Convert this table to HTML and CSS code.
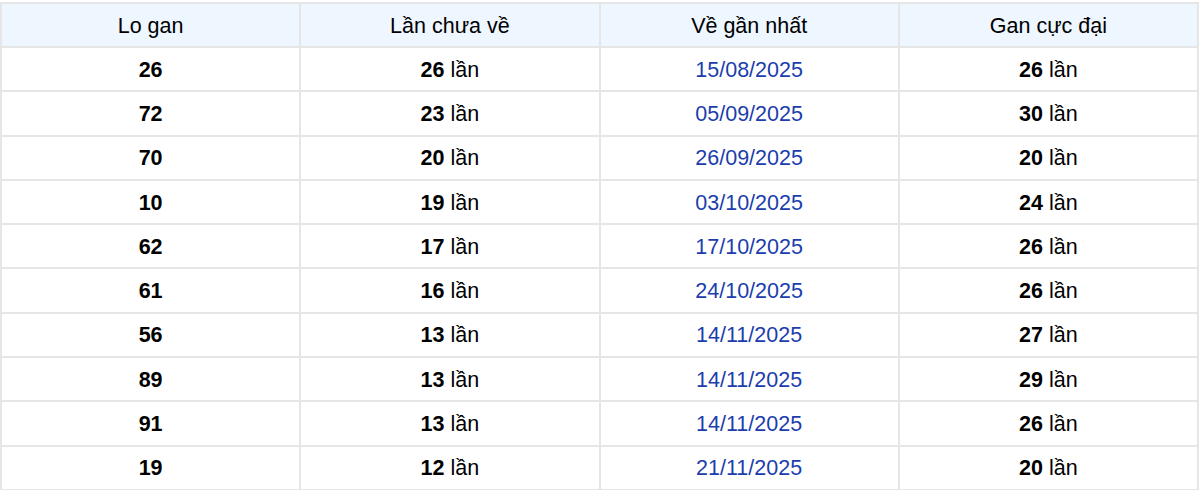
FILE: index.html
```html
<!DOCTYPE html>
<html lang="vi">
<head>
<meta charset="utf-8">
<title>Lo gan</title>
<link rel="stylesheet" href="styles.css">
</head>
<body>
<div class="wrap">
<table class="gan">
<thead>
<tr><th>Lo gan</th><th>Lần chưa về</th><th>Về gần nhất</th><th>Gan cực đại</th></tr>
</thead>
<tbody>
<tr><td><b>26</b></td><td><b>26</b> lần</td><td class="date">15/08/2025</td><td><b>26</b> lần</td></tr>
<tr><td><b>72</b></td><td><b>23</b> lần</td><td class="date">05/09/2025</td><td><b>30</b> lần</td></tr>
<tr><td><b>70</b></td><td><b>20</b> lần</td><td class="date">26/09/2025</td><td><b>20</b> lần</td></tr>
<tr><td><b>10</b></td><td><b>19</b> lần</td><td class="date">03/10/2025</td><td><b>24</b> lần</td></tr>
<tr><td><b>62</b></td><td><b>17</b> lần</td><td class="date">17/10/2025</td><td><b>26</b> lần</td></tr>
<tr><td><b>61</b></td><td><b>16</b> lần</td><td class="date">24/10/2025</td><td><b>26</b> lần</td></tr>
<tr><td><b>56</b></td><td><b>13</b> lần</td><td class="date">14/11/2025</td><td><b>27</b> lần</td></tr>
<tr><td><b>89</b></td><td><b>13</b> lần</td><td class="date">14/11/2025</td><td><b>29</b> lần</td></tr>
<tr><td><b>91</b></td><td><b>13</b> lần</td><td class="date">14/11/2025</td><td><b>26</b> lần</td></tr>
<tr><td><b>19</b></td><td><b>12</b> lần</td><td class="date">21/11/2025</td><td><b>20</b> lần</td></tr>
</tbody>
</table>
</div>
</body>
</html>
```
FILE: styles.css
```css
html, body {
  margin: 0;
  padding: 0;
  background: #ffffff;
}
.wrap {
  padding-top: 2px;
  width: 1199px;
}
.gan {
  width: 100%;
  border-collapse: collapse;
  table-layout: fixed;
  font-family: "Liberation Sans", Arial, sans-serif;
  font-size: 21.5px;
  color: #000000;
}
.gan th,
.gan td {
  border: 2px solid #e6e6e6;
  text-align: center;
  vertical-align: middle;
  padding: 1px 0 0;
  height: 41.3px;
  line-height: 24px;
}
.gan th {
  font-weight: normal;
  background: #eef6ff;
  height: 41px;
}
.gan b {
  font-weight: bold;
}
.gan .date {
  color: #1b3dad;
}
```
